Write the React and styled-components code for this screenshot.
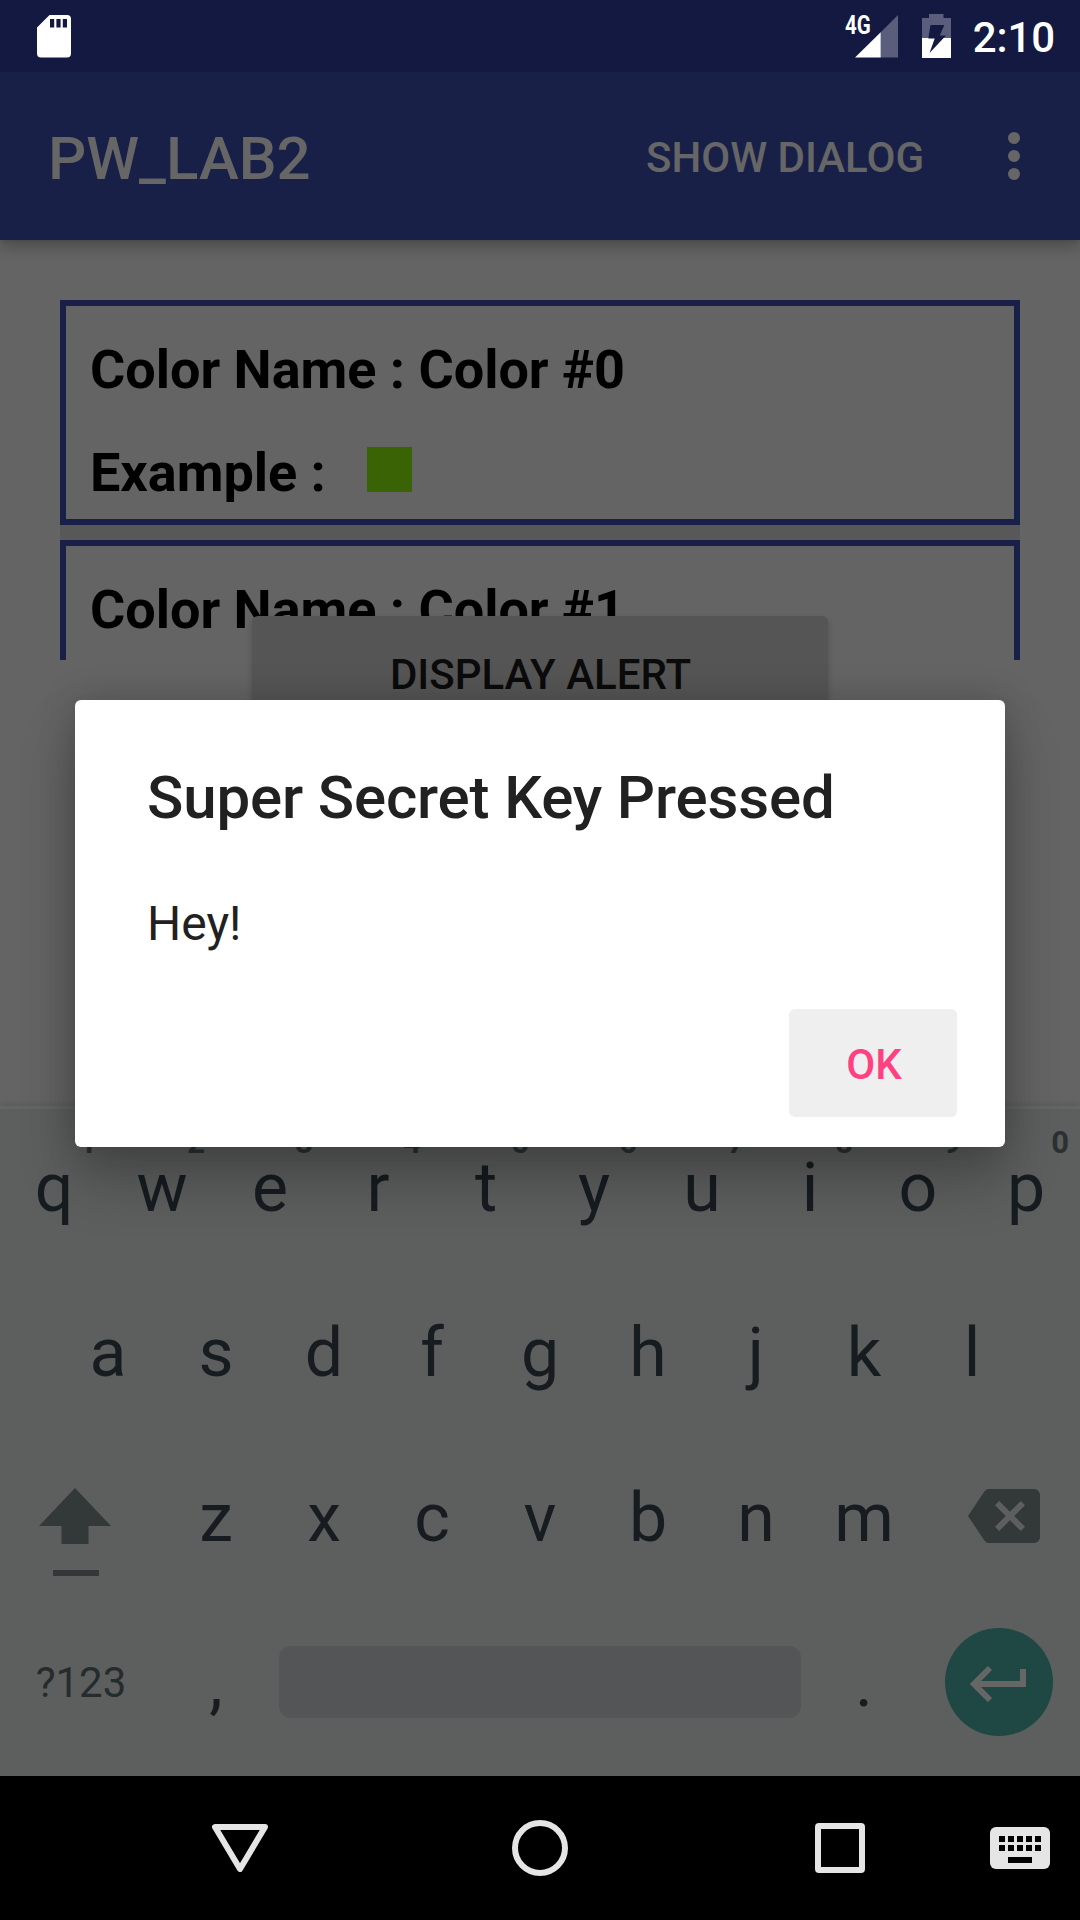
import React from "react";
import styled, { createGlobalStyle } from "styled-components";

const Global = createGlobalStyle`
  * { box-sizing: border-box; }
  body { margin: 0; background: #000; }
  svg { display: block; flex: none; }
`;

const Screen = styled.div`
  position: relative;
  width: 1080px;
  height: 1920px;
  display: flex;
  flex-direction: column;
  overflow: hidden;
  background: #646464;
  font-family: Roboto, "Liberation Sans", sans-serif;
`;

const StatusBar = styled.header`
  position: relative;
  z-index: 1;
  height: 72px;
  flex: none;
  display: flex;
  align-items: center;
  padding: 0 25px 0 37px;
  background: #131940;
  color: #fff;
`;

const StatusIcons = styled.div`
  display: flex;
  align-items: center;
  margin-left: auto;
`;

const Network = styled.span`
  width: 31px;
  margin: -21px -21px 0 0;
  font-size: 25px;
  line-height: 30px;
  font-weight: 700;
  transform: scaleX(0.82);
  transform-origin: left center;
`;

const SignalIcon = styled.svg`
  margin-right: 24px;
`;

const Clock = styled.span`
  margin: 3px 0 0 22px;
  font-size: 42px;
  line-height: 50px;
  font-weight: 500;
  letter-spacing: -0.1px;
`;

const AppBar = styled.nav`
  position: relative;
  height: 168px;
  flex: none;
  display: flex;
  align-items: center;
  padding: 0 60px 0 48px;
  background: #192048;
  color: #666;
  box-shadow: 0 7px 14px rgba(0, 0, 0, 0.24), 0 0 5px rgba(0, 0, 0, 0.1);
`;

const AppTitle = styled.h1`
  margin: 5px auto 0 0;
  font-size: 60px;
  line-height: 70px;
  font-weight: 500;
`;

const MenuAction = styled.span`
  margin: 4px 84px 0 0;
  font-size: 42px;
  line-height: 50px;
  font-weight: 500;
`;

const Content = styled.main`
  height: 866px;
  flex: none;
  display: flex;
  flex-direction: column;
  align-items: center;
  padding-top: 60px;
`;

const ColorList = styled.div`
  width: 960px;
  height: 360px;
  flex: none;
  display: flex;
  flex-direction: column;
  gap: 15px;
  overflow: hidden;
  background: #585858;
`;

const ColorCard = styled.article`
  height: 225px;
  flex: none;
  padding: 32px 24px 0;
  border: 6px solid #192048;
  background: #646464;
  color: #000;
  font-size: 54px;
  line-height: 64px;
  font-weight: 700;
  letter-spacing: -0.03px;
`;

const CardLine = styled.div`
  display: flex;
  align-items: center;
  height: 64px;
  margin-bottom: 39px;
  white-space: pre;
`;

const Swatch = styled.span`
  width: 45px;
  height: 45px;
  margin: -8px 0 0 41px;
  background: ${(p) => p.$color};
`;

const AlertButton = styled.button`
  width: 576px;
  height: 108px;
  flex: none;
  margin-top: -44px;
  padding: 10px 0 0 1px;
  z-index: 1;
  border: 0;
  border-radius: 6px;
  background: #555;
  color: #0b0b0b;
  font: 500 42px/50px Roboto, sans-serif;
  box-shadow: 0 3px 6px rgba(0, 0, 0, 0.2);
`;

const Keyboard = styled.section`
  height: 670px;
  flex: none;
  border-top: 3px solid #626564;
  background: #5d5f5e;
  box-shadow: 0 -1px 6px rgba(0, 0, 0, 0.12);
  color: #161c20;
`;

const KeyRow = styled.div`
  display: flex;
  height: 165px;
  padding: 0 ${(p) => p.$inset || 0}px;
`;

const Key = styled.div`
  position: relative;
  width: 108px;
  flex: none;
  display: flex;
  align-items: center;
  justify-content: center;
  padding: 0 0 8px;
  font-size: 68px;
  line-height: 80px;
`;

const Hint = styled.span`
  position: absolute;
  top: 16px;
  right: 11px;
  font-size: 31px;
  line-height: 36px;
  font-weight: 700;
  color: #2b3133;
`;

const ShiftKey = styled(Key)`
  width: 162px;
  padding: 21px 12px 0 0;
`;

const DeleteKey = styled(Key)`
  width: 162px;
  padding: 0 0 12px 10px;
`;

const SymbolsKey = styled(Key)`
  width: 162px;
  padding: 0 0 8px;
  font-size: 42px;
  color: #252c2e;
`;

const SpaceKey = styled.div`
  width: 522px;
  height: 72px;
  margin: 42px 9px 0;
  border-radius: 12px;
  background: #545557;
`;

const EnterKey = styled.div`
  width: 108px;
  height: 108px;
  margin: 24px 0 0 27px;
  padding: 2px 2px 0 0;
  display: flex;
  align-items: center;
  justify-content: center;
  border-radius: 50%;
  background: #1f4844;
`;

const NavBar = styled.footer`
  position: relative;
  height: 144px;
  flex: none;
  display: flex;
  align-items: center;
  padding: 0 30px 0 212px;
  background: #000;
`;

const NavIcon = styled.svg`
  margin-right: ${(p) => p.$after || 0}px;
`;

const Dialog = styled.div`
  position: absolute;
  left: 75px;
  top: 700px;
  z-index: 2;
  width: 930px;
  height: 447px;
  display: flex;
  flex-direction: column;
  padding: 63px 48px 30px 72px;
  border-radius: 6px;
  background: #fff;
  color: #212121;
  box-shadow: 0 34px 56px rgba(0, 0, 0, 0.24), 0 0 36px rgba(0, 0, 0, 0.18);
`;

const DialogTitle = styled.h2`
  margin: 0;
  font-size: 60px;
  line-height: 70px;
  font-weight: 500;
  letter-spacing: -0.15px;
`;

const DialogText = styled.p`
  margin: 61px 0 0;
  font-size: 48px;
  line-height: 60px;
`;

const DialogButton = styled.button`
  width: 168px;
  height: 108px;
  margin-top: auto;
  align-self: flex-end;
  padding: 4px 0 0 2px;
  border: 0;
  border-radius: 6px;
  background: #efefef;
  color: #ff4081;
  font: 500 42px/50px Roboto, sans-serif;
`;

const topRow = "qwertyuiop".split("");
const homeRow = "asdfghjkl".split("");
const bottomRow = "zxcvbnm".split("");
const keyColumns = [9, 18, 27, 36, 45];

function SdCard() {
  return (
    <svg width="34" height="43" viewBox="0 0 34 43">
      <path fill="#fff" fillRule="evenodd" d="M12.5 0H30q4 0 4 4v34.500q0 4-4 4H4q-4 0-4-4V12.500zM13 4v8.500h4.200V4zm6.400 0v8.500h4.200V4zm6.400 0v8.500H30V4z" />
    </svg>
  );
}

function Battery() {
  return (
    <svg width="29" height="44" viewBox="0 0 29 44">
      <path fill="#5a5d7b" d="M7 0h14.500v4H29v20H0V4h7z" />
      <path fill="#fff" d="M0 24h29v20H0z" />
      <path fill="#131940" d="M8.500 11h13.800l-4.500 10.500H24L7.500 39l5.200-14.500H6.300z" />
    </svg>
  );
}

export default function App() {
  return (
    <Screen>
      <Global />
      <StatusBar>
        <SdCard />
        <StatusIcons>
          <Network>4G</Network>
          <SignalIcon width="43" height="43" viewBox="0 0 43 43">
            <path fill="#5a5d7b" d="M43 0v42.500H25.500v-25z" />
            <path fill="#fff" d="M25.700 17.300v25.200H0z" />
          </SignalIcon>
          <Battery />
          <Clock>2:10</Clock>
        </StatusIcons>
      </StatusBar>
      <AppBar>
        <AppTitle>PW_LAB2</AppTitle>
        <MenuAction>SHOW DIALOG</MenuAction>
        <svg width="12" height="48" viewBox="0 0 12 48" fill="#666">
          <circle cx="6" cy="6" r="6" />
          <circle cx="6" cy="24" r="6" />
          <circle cx="6" cy="42" r="6" />
        </svg>
      </AppBar>
      <Content>
        <ColorList>
          <ColorCard>
            <CardLine>Color Name : Color #0</CardLine>
            <CardLine>
              Example :<Swatch $color="#3a6306" />
            </CardLine>
          </ColorCard>
          <ColorCard>
            <CardLine>Color Name : Color #1</CardLine>
          </ColorCard>
        </ColorList>
        <AlertButton>DISPLAY ALERT</AlertButton>
      </Content>
      <Keyboard>
        <KeyRow>
          {topRow.map((letter, i) => (
            <Key key={letter}>
              {letter}
              <Hint>{(i + 1) % 10}</Hint>
            </Key>
          ))}
        </KeyRow>
        <KeyRow $inset={54}>
          {homeRow.map((letter) => (
            <Key key={letter}>{letter}</Key>
          ))}
        </KeyRow>
        <KeyRow>
          <ShiftKey>
            <svg width="72" height="88" viewBox="0 0 72 88">
              <path fill="#323938" d="M36 0l36 38H49.500v18h-27V38H0z" />
              <path fill="#35363a" d="M14 82h46v6H14z" />
            </svg>
          </ShiftKey>
          {bottomRow.map((letter) => (
            <Key key={letter}>{letter}</Key>
          ))}
          <DeleteKey>
            <svg width="72" height="72" viewBox="0 0 24 24">
              <path fill="#323938" d="M22 3H7c-.69 0-1.230.35-1.590.88L0 12l5.410 8.110c.36.53.9.89 1.590.89h15c1.100 0 2-.9 2-2V5c0-1.100-.9-2-2-2zm-3 12.590L17.590 17 14 13.410 10.410 17 9 15.590 12.590 12 9 8.410 10.410 7 14 10.590 17.590 7 19 8.410 15.410 12 19 15.590z" />
            </svg>
          </DeleteKey>
        </KeyRow>
        <KeyRow>
          <SymbolsKey>?123</SymbolsKey>
          <Key>,</Key>
          <SpaceKey />
          <Key>.</Key>
          <EnterKey>
            <svg width="58" height="38" viewBox="0 0 58 38" fill="none" stroke="#666" strokeWidth="6">
              <path d="M54 5v15H6" />
              <path d="M21 4L5 20l16 16" />
            </svg>
          </EnterKey>
        </KeyRow>
      </Keyboard>
      <NavBar>
        <NavIcon $after={244} width="56" height="48" viewBox="0 0 56 48">
          <path d="M3 3h50L28 45z" fill="none" stroke="#e5e5e5" strokeWidth="6" strokeLinejoin="round" />
        </NavIcon>
        <NavIcon $after={247} width="56" height="56" viewBox="0 0 56 56">
          <circle cx="28" cy="28" r="25" fill="none" stroke="#e5e5e5" strokeWidth="6" />
        </NavIcon>
        <NavIcon $after={125} width="50" height="50" viewBox="0 0 50 50">
          <path fill="#e5e5e5" fillRule="evenodd" d="M4 0h42q4 0 4 4v42q0 4-4 4H4q-4 0-4-4V4q0-4 4-4zM6 6v38h38V6z" />
        </NavIcon>
        <NavIcon width="60" height="42" viewBox="0 0 60 42">
          <rect width="60" height="42" rx="6" fill="#e5e5e5" />
          {keyColumns.map((x) => (
            <path key={x} d={`M${x} 9h6v6h-6zM${x} 18h6v6h-6z`} />
          ))}
          <path d="M18 30h24v6H18z" />
        </NavIcon>
      </NavBar>
      <Dialog>
        <DialogTitle>Super Secret Key Pressed</DialogTitle>
        <DialogText>Hey!</DialogText>
        <DialogButton>OK</DialogButton>
      </Dialog>
    </Screen>
  );
}
